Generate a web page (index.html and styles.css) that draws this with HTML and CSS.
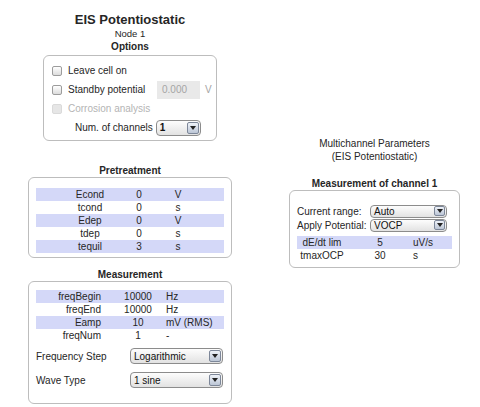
FILE: index.html
```html
<!DOCTYPE html>
<html lang="en">

<head>
    <meta charset="UTF-8" />
    <title>EIS Potentiostatic</title>
    <link rel="stylesheet" href="styles.css">
</head>

<body>

    <div class="page">
        <div class="main-col">
            <h1>EIS Potentiostatic</h1>
            <div class="node">Node 1</div>
            <h3 class="group-title">Options</h3>

            <div class="panel options">
                <div class="check-row"><span class="check"></span>Leave cell on</div>
                <div class="check-row">
                    <span class="check"></span>
                    <span class="standby-label">Standby potential</span>
                    <span class="num-input">0.000</span>
                    <span class="unit-muted">V</span>
                </div>
                <div class="check-row disabled"><span class="check"></span>Corrosion analysis</div>
                <div class="channels-row">
                    Num. of channels
                    <div class="select sel-channels"><span>1</span><span class="arrow"></span></div>
                </div>
            </div>

            <h3 class="group-title pre-title">Pretreatment</h3>
            <div class="panel pretreat">
                <div class="prow band"><span>Econd</span><span>0</span><span>V</span></div>
                <div class="prow"><span>tcond</span><span>0</span><span>s</span></div>
                <div class="prow band"><span>Edep</span><span>0</span><span>V</span></div>
                <div class="prow"><span>tdep</span><span>0</span><span>s</span></div>
                <div class="prow band"><span>tequil</span><span>3</span><span>s</span></div>
            </div>

            <h3 class="group-title meas-title">Measurement</h3>
            <div class="panel measure">
                <div class="mrow band"><span>freqBegin</span><span>10000</span><span>Hz</span></div>
                <div class="mrow"><span>freqEnd</span><span>10000</span><span>Hz</span></div>
                <div class="mrow band"><span>Eamp</span><span>10</span><span>mV (RMS)</span></div>
                <div class="mrow"><span>freqNum</span><span>1</span><span>-</span></div>

                <div class="select-row first">
                    <span>Frequency Step</span>
                    <div class="select sel-wide"><span>Logarithmic</span><span class="arrow"></span></div>
                </div>
                <div class="select-row">
                    <span>Wave Type</span>
                    <div class="select sel-wide"><span>1 sine</span><span class="arrow"></span></div>
                </div>
            </div>
        </div>

        <div class="side-col">
            <div class="multi">
                <div>Multichannel Parameters</div>
                <div>(EIS Potentiostatic)</div>
            </div>
            <h3 class="group-title chan-title">Measurement of channel 1</h3>
            <div class="panel channel">
                <div class="field-row">
                    <span>Current range:</span>
                    <div class="select sel-small"><span>Auto</span><span class="arrow"></span></div>
                </div>
                <div class="field-row">
                    <span>Apply Potential:</span>
                    <div class="select sel-small"><span>VOCP</span><span class="arrow"></span></div>
                </div>
                <div class="crow band first"><span>dE/dt lim</span><span>5</span><span>uV/s</span></div>
                <div class="crow"><span>tmaxOCP</span><span>30</span><span>s</span></div>
            </div>
        </div>
    </div>

</body>

</html>
```

FILE: styles.css
```css
body {
    margin: 0;
    font-family: "Liberation Sans", Arial, sans-serif;
    font-size: 10px;
    color: #262626;
    background: #fff;
}

.page {
    display: flex;
    padding-left: 28px;
}

.main-col {
    width: 204px;
}

h1 {
    margin: 12px 0 0;
    font-size: 13px;
    line-height: 16px;
    text-align: center;
}

.node {
    font-size: 9.5px;
    line-height: 11px;
    text-align: center;
}

.group-title {
    margin: 0;
    font-size: 10px;
    line-height: 13px;
    text-align: center;
}

.node + .group-title {
    margin-top: 1px;
}

.panel {
    border: 1px solid #bdbdbd;
    border-radius: 6px;
}

/* options */
.options {
    width: 164px;
    margin: 2px auto 0;
    padding: 5px 0 3px 8px;
}

.check-row {
    display: flex;
    align-items: center;
    height: 19px;
}

.check {
    width: 10px;
    height: 10px;
    box-sizing: border-box;
    margin-right: 6px;
    border: 1px solid #9c9c9c;
    border-radius: 2px;
    background: linear-gradient(#fff, #dcdcdc);
}

.check-row.disabled {
    color: #b4b4b4;
}

.check-row.disabled .check {
    border-color: #dadada;
    background: #e6e6e6;
}

.standby-label {
    width: 89px;
}

.num-input {
    width: 43px;
    height: 18px;
    box-sizing: border-box;
    padding-left: 5px;
    line-height: 18px;
    background: #e9e9e9;
    color: #a5a5a5;
}

.unit-muted {
    margin-left: 5px;
    color: #a5a5a5;
}

.channels-row {
    display: flex;
    align-items: center;
    height: 19px;
    padding-left: 23px;
}

/* select boxes */
.select {
    display: flex;
    align-items: center;
    justify-content: space-between;
    box-sizing: border-box;
    padding: 0 1px 0 3px;
    border: 1px solid #8c8c8c;
    border-radius: 4px;
    background: linear-gradient(#fdfdfd, #e2e2e2);
    color: #111;
}

.arrow {
    display: flex;
    align-items: center;
    justify-content: center;
    width: 10px;
    height: 10px;
    border: 1px solid #7d8799;
    border-radius: 2px;
    background: linear-gradient(#eef2f8, #bcc6d6);
}

.arrow::after {
    content: "";
    border-left: 3px solid transparent;
    border-right: 3px solid transparent;
    border-top: 4px solid #222;
}

.sel-channels {
    width: 45px;
    height: 16px;
    margin-left: 3px;
    font-weight: bold;
}

.sel-wide {
    width: 93px;
    height: 16px;
}

.sel-small {
    width: 77px;
    height: 13px;
}

.sel-small .arrow {
    width: 9px;
    height: 8px;
}

/* parameter tables */
.band {
    background: #d4d8f8;
}

.pre-title {
    margin-top: 23px;
}

.pretreat {
    padding: 10px 7px 4px;
}

.prow {
    display: grid;
    grid-template-columns: 72px 26px 52px;
    padding-left: 18px;
    height: 13px;
    line-height: 13px;
    text-align: center;
}

.meas-title {
    margin-top: 10px;
}

.measure {
    padding: 8px 7px 15px;
}

.mrow {
    display: grid;
    grid-template-columns: 75px 54px 1fr;
    height: 13px;
    line-height: 13px;
}

.mrow span:first-child {
    padding-right: 10px;
    text-align: right;
}

.mrow span:nth-child(2) {
    text-align: center;
}

.mrow span:last-child {
    padding-left: 1px;
}

.select-row {
    display: grid;
    grid-template-columns: 94px 93px;
    align-items: center;
    margin-top: 8px;
}

.select-row.first {
    margin-top: 6px;
}

/* multichannel side */
.side-col {
    width: 171px;
    margin-left: 57px;
}

.multi {
    margin-top: 137px;
    line-height: 13px;
    text-align: center;
}

.chan-title {
    margin-top: 14px;
}

.channel {
    padding: 13px 7px 5px;
}

.field-row {
    display: grid;
    grid-template-columns: 73px 77px;
    align-items: center;
    height: 14px;
}

.crow {
    display: grid;
    grid-template-columns: 50px 66px 1fr;
    height: 13px;
    line-height: 13px;
}

.crow.first {
    margin-top: 4px;
}

.crow span:first-child,
.crow span:nth-child(2) {
    text-align: center;
}
```
